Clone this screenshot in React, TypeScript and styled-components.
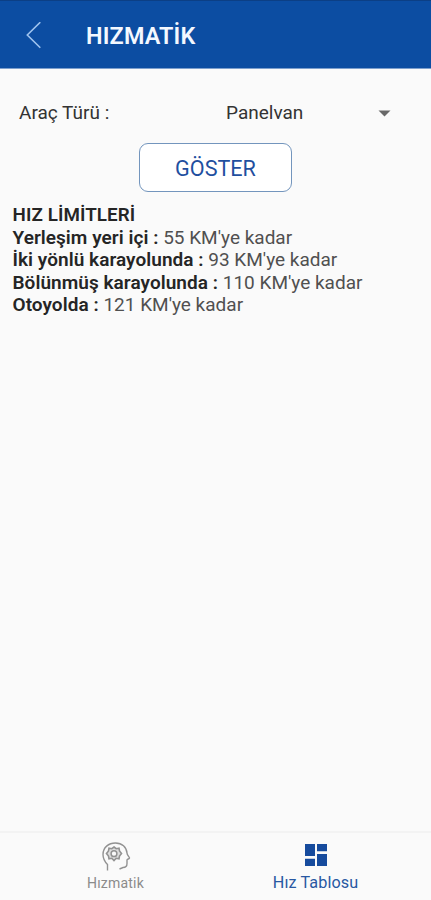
import React from 'react';
import styled, { createGlobalStyle } from 'styled-components';

const GlobalStyle = createGlobalStyle`
  * { box-sizing: border-box; }
  body { margin: 0; background: #fafafa; font-family: Roboto, sans-serif; }
`;

const Screen = styled.div`
  display: flex;
  flex-direction: column;
  height: 900px;
  width: 431px;
  background: #fafafa;
  color: #333;
  overflow: hidden;
`;

const Header = styled.header`
  display: flex;
  align-items: center;
  flex: none;
  height: 69px;
  padding: 3px 0 0 26px;
  background: #0c4da2;
  border-top: 1px solid #0c3f85;
  border-bottom: 1px solid #7d9fcd;
`;

const BackButton = styled.button`
  display: flex;
  width: 60px;
  padding: 0;
  border: 0;
  background: none;
`;

const Title = styled.h1`
  margin: 0;
  color: #f4f8ff;
  font-size: 23.4px;
  line-height: 28px;
  font-weight: 600;
  letter-spacing: 0.15px;
`;

const Content = styled.main`
  flex: 1;
  display: flex;
  flex-direction: column;
`;

const FieldRow = styled.div`
  display: grid;
  grid-template-columns: 207px 152px 14px;
  align-items: center;
  height: 46px;
  margin-top: 21px;
  padding-left: 19px;
  font-size: 19px;
  line-height: 24px;
`;

const FieldText = styled.span`
  white-space: nowrap;
`;

const ShowButton = styled.button`
  flex: none;
  width: 153px;
  height: 49px;
  margin: 7px 0 0 139px;
  padding: 2px 0 0;
  border: 1px solid #7395bd;
  border-radius: 9px;
  background: #fff;
  color: #1f4f9f;
  font: 400 21.6px/28px Roboto, sans-serif;
`;

const Limits = styled.section`
  padding: 12px 0 0 12.5px;
  font-size: 19px;
  line-height: 22.4px;
`;

const LimitsTitle = styled.h2`
  margin: 0;
  font-size: 18.8px;
  line-height: 23px;
  font-weight: 600;
  color: #252525;
  letter-spacing: 0.1px;
`;

const Limit = styled.div`
  white-space: nowrap;
  color: #505050;
`;

const Label = styled.b`
  font-weight: 600;
  color: #252525;
  letter-spacing: 0.05px;
`;

const TabBar = styled.nav`
  display: grid;
  grid-template-columns: 231px 169px;
  flex: none;
  height: 69px;
  border-top: 2px solid #f3f3f3;
`;

const Tab = styled.div<{ $active?: boolean }>`
  display: flex;
  flex-direction: column;
  align-items: center;
  justify-content: space-between;
  height: 60px;
  padding-top: ${p => (p.$active ? 11 : 8)}px;
  color: ${p => (p.$active ? '#2858a2' : '#8b8b8b')};
  font-size: ${p => (p.$active ? 16.2 : 14)}px;
  line-height: 20px;
  letter-spacing: ${p => (p.$active ? 0.1 : 0.2)}px;
`;

const limits = [
  { label: 'Yerleşim yeri içi', value: 55 },
  { label: 'İki yönlü karayolunda', value: 93 },
  { label: 'Bölünmüş karayolunda', value: 110 },
  { label: 'Otoyolda', value: 121 },
];

const BackIcon = () => (
  <svg width="16" height="28" viewBox="0 0 16 28" fill="none" stroke="#9fc3ee" strokeWidth="1.6">
    <path d="M14.3 .2 1.3 13l13 12.8" />
  </svg>
);

const HeadIcon = () => (
  <svg width="30" height="30" viewBox="0 0 30 30" fill="none" stroke="#929292" strokeWidth="1.4">
    <path d="M6.5 29.500v-6C3.500 20.500 2 17 2 13.500 2 6.500 7.500 2 14.500 2 21 2 25.500 6 26 12c0 2 2.500 4 2.500 5s-2.500 1-2.500 2v3.500c0 2.500-1 4-4 4l-3.500 1.500" />
    <path d="m13 6 2.200 1.700 2.800-.5.500 2.800 2 2.500-2 2.500-.5 2.800-2.800-.5L13 19.500l-2.200-2.200-2.800.5-.5-2.800-2-2.500 2-2.500.5-2.800 2.800.5z" strokeWidth="1.600" fill="#dedede" />
    <circle cx="13" cy="12.700" r="2.900" fill="#fafafa" strokeWidth="1.500" />
  </svg>
);

const DashboardIcon = () => (
  <svg width="22" height="22" viewBox="0 0 22 22" fill="#164b9d">
    <path d="M0 0h10v12H0zM12 0h10v7.300H12zM0 14.700h10V22H0zM12 10h10v12H12z" />
  </svg>
);

export default function App() {
  return (
    <Screen>
      <GlobalStyle />
      <Header>
        <BackButton aria-label="Geri"><BackIcon /></BackButton>
        <Title>HIZMATİK</Title>
      </Header>
      <Content>
        <FieldRow>
          <FieldText>Araç Türü :</FieldText>
          <FieldText>Panelvan</FieldText>
          <svg width="13" height="7" viewBox="0 0 13 7" fill="#686868"><path d="M.5 .5h12l-6 6z" /></svg>
        </FieldRow>
        <ShowButton>GÖSTER</ShowButton>
        <Limits>
          <LimitsTitle>HIZ LİMİTLERİ</LimitsTitle>
          {limits.map(({ label, value }) => (
            <Limit key={label}>
              <Label>{label} :</Label> {value} KM'ye kadar
            </Limit>
          ))}
        </Limits>
      </Content>
      <TabBar>
        <Tab><HeadIcon />Hızmatik</Tab>
        <Tab $active><DashboardIcon />Hız Tablosu</Tab>
      </TabBar>
    </Screen>
  );
}
